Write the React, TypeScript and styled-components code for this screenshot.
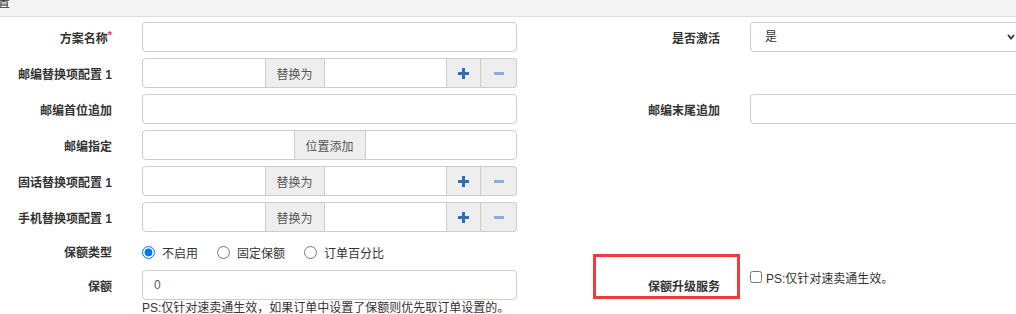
import React from "react";
import styled, { createGlobalStyle } from "styled-components";

const GlobalStyle = createGlobalStyle`
  html, body {
    margin: 0;
    padding: 0;
    background: #fff;
    overflow: hidden;
  }
  body {
    font-family: "Liberation Sans", "Noto Sans CJK SC", sans-serif;
    font-size: 12px;
    color: #333;
  }
`;

const Page = styled.div`
  width: 1016px;
  height: 314px;
  overflow: hidden;
`;

const PanelHeading = styled.div`
  height: 16px;
  background: #f4f4f4;
  border-bottom: 1px solid #ddd;
  overflow: hidden;
`;

const HeadingTitle = styled.div`
  font-family: "Noto Sans CJK SC", sans-serif;
  font-size: 12px;
  line-height: 12px;
  margin: -4px 0 0 -2px;
  color: #333;
`;

const Form = styled.div`
  display: grid;
  grid-template-columns: 112px 375px 173px 270px;
  column-gap: 30px;
  row-gap: 6px;
  padding-top: 5px;
  align-items: start;
`;

const Label = styled.label<{ $short?: boolean }>`
  height: ${(p) => (p.$short ? "26px" : "30px")};
  display: flex;
  align-items: center;
  justify-content: flex-end;
  font-family: "Liberation Sans", "Noto Sans CJK SC", sans-serif;
  font-weight: bold;
  font-size: 12px;
  color: #333;
  white-space: nowrap;
  position: relative;
`;

const Required = styled.span`
  color: #f0306a;
  font-weight: bold;
  align-self: flex-start;
  margin-top: 8px;
  font-size: 11px;
  line-height: 11px;
`;

const Highlight = styled.div`
  position: absolute;
  left: 46px;
  top: -16px;
  width: 141px;
  height: 39px;
  border: 3px solid #f23a3a;
  pointer-events: none;
`;

const Input = styled.input`
  box-sizing: border-box;
  height: 30px;
  width: 100%;
  border: 1px solid #ccc;
  border-radius: 4px;
  padding: 0 11px;
  font-family: "Liberation Sans", "Noto Sans CJK SC", sans-serif;
  font-size: 12px;
  color: #555;
  background: #fff;
  outline: none;
`;

const SelectWrap = styled.div`
  position: relative;
`;

const Select = styled.select`
  box-sizing: border-box;
  height: 30px;
  width: 100%;
  border: 1px solid #ccc;
  border-radius: 4px;
  padding: 0 14px;
  appearance: none;
  background: #fff;
  font-family: "Liberation Sans", "Noto Sans CJK SC", sans-serif;
  font-size: 12px;
  color: #333;
  outline: none;
`;

const Chevron = styled.svg`
  position: absolute;
  right: 5px;
  top: 12px;
  pointer-events: none;
`;

const Group = styled.div`
  display: flex;
  height: 30px;
`;

const GroupInput = styled.input<{ $first?: boolean; $last?: boolean }>`
  box-sizing: border-box;
  flex: 1;
  min-width: 0;
  height: 30px;
  border: 1px solid #ccc;
  border-radius: ${(p) =>
    p.$first ? "4px 0 0 4px" : p.$last ? "0 4px 4px 0" : "0"};
  padding: 0 11px;
  font-size: 12px;
  outline: none;
  background: #fff;
`;

const Addon = styled.span`
  box-sizing: border-box;
  height: 30px;
  display: flex;
  align-items: center;
  padding: 0 11px;
  background: #eee;
  border: 1px solid #ccc;
  margin: 0 -1px;
  position: relative;
  color: #555;
  font-family: "Noto Sans CJK SC", sans-serif;
  font-size: 12px;
  white-space: nowrap;
`;

const IconBtn = styled.button<{ $last?: boolean }>`
  box-sizing: border-box;
  width: ${(p) => (p.$last ? "36px" : "35px")};
  height: 30px;
  display: flex;
  align-items: center;
  justify-content: center;
  background: #eee;
  border: 1px solid #ccc;
  border-left: ${(p) => (p.$last ? "none" : "1px solid #ccc")};
  border-radius: ${(p) => (p.$last ? "0 4px 4px 0" : "0")};
  margin-left: ${(p) => (p.$last ? "0" : "-1px")};
  padding: 0;
  cursor: pointer;
`;

const Radios = styled.div`
  height: 26px;
  display: flex;
  align-items: center;
  padding-top: 2px;
  box-sizing: border-box;
`;

const RadioItem = styled.label`
  display: flex;
  align-items: center;
  margin-right: 19px;
  font-family: "Noto Sans CJK SC", sans-serif;
  font-size: 12px;
  color: #333;
`;

const Radio = styled.input`
  width: 13px;
  height: 13px;
  margin: 1px 7px 0 0;
`;

const FieldStack = styled.div`
  display: flex;
  flex-direction: column;
`;

const HelpText = styled.div`
  font-family: "Liberation Sans", "Noto Sans CJK SC", sans-serif;
  font-size: 12px;
  line-height: 14px;
  color: #333;
  margin-top: 1px;
  white-space: nowrap;
`;

const CheckLine = styled.label`
  display: flex;
  align-items: center;
  height: 14px;
  font-family: "Liberation Sans", "Noto Sans CJK SC", sans-serif;
  font-size: 12px;
  color: #333;
  white-space: nowrap;
`;

const Check = styled.input`
  width: 12px;
  height: 12px;
  margin: 0 4px 0 0;
`;

const Empty = styled.div``;

const PlusIcon = () => (
  <svg width="11" height="11" viewBox="0 0 11 11">
    <rect x="4" y="0" width="3" height="11" fill="#2f6fb7" />
    <rect x="0" y="4" width="11" height="3" fill="#2f6fb7" />
  </svg>
);

const MinusIcon = () => (
  <svg width="10" height="3" viewBox="0 0 10 3">
    <rect x="0" y="0" width="10" height="3" fill="#86b0da" />
  </svg>
);

const ReplaceGroup = () => (
  <Group>
    <GroupInput $first />
    <Addon>替换为</Addon>
    <GroupInput />
    <IconBtn>
      <PlusIcon />
    </IconBtn>
    <IconBtn $last>
      <MinusIcon />
    </IconBtn>
  </Group>
);

export default function App() {
  return (
    <Page>
      <GlobalStyle />
      <PanelHeading>
        <HeadingTitle>置</HeadingTitle>
      </PanelHeading>
      <Form>
        <Label>
          方案名称<Required>*</Required>
        </Label>
        <Input />
        <Label>是否激活</Label>
        <SelectWrap>
          <Select defaultValue="1">
            <option value="1">是</option>
            <option value="0">否</option>
          </Select>
          <Chevron width="8" height="6" viewBox="0 0 8 6">
            <path d="M1 1 L4 4.5 L7 1" stroke="#333" strokeWidth="1.8" fill="none" />
          </Chevron>
        </SelectWrap>

        <Label>邮编替换项配置 1</Label>
        <ReplaceGroup />
        <Empty />
        <Empty />

        <Label>邮编首位追加</Label>
        <Input />
        <Label>邮编末尾追加</Label>
        <Input />

        <Label>邮编指定</Label>
        <Group>
          <GroupInput $first />
          <Addon>位置添加</Addon>
          <GroupInput $last />
        </Group>
        <Empty />
        <Empty />

        <Label>固话替换项配置 1</Label>
        <ReplaceGroup />
        <Empty />
        <Empty />

        <Label>手机替换项配置 1</Label>
        <ReplaceGroup />
        <Empty />
        <Empty />

        <Label $short>保额类型</Label>
        <Radios>
          <RadioItem>
            <Radio type="radio" name="insure" defaultChecked />
            不启用
          </RadioItem>
          <RadioItem>
            <Radio type="radio" name="insure" />
            固定保额
          </RadioItem>
          <RadioItem>
            <Radio type="radio" name="insure" />
            订单百分比
          </RadioItem>
        </Radios>
        <Empty />
        <Empty />

        <Label>保额</Label>
        <FieldStack>
          <Input defaultValue="0" />
          <HelpText>PS:仅针对速卖通生效，如果订单中设置了保额则优先取订单设置的。</HelpText>
        </FieldStack>
        <Label>
          保额升级服务
          <Highlight />
        </Label>
        <CheckLine>
          <Check type="checkbox" />
          PS:仅针对速卖通生效。
        </CheckLine>
      </Form>
    </Page>
  );
}
